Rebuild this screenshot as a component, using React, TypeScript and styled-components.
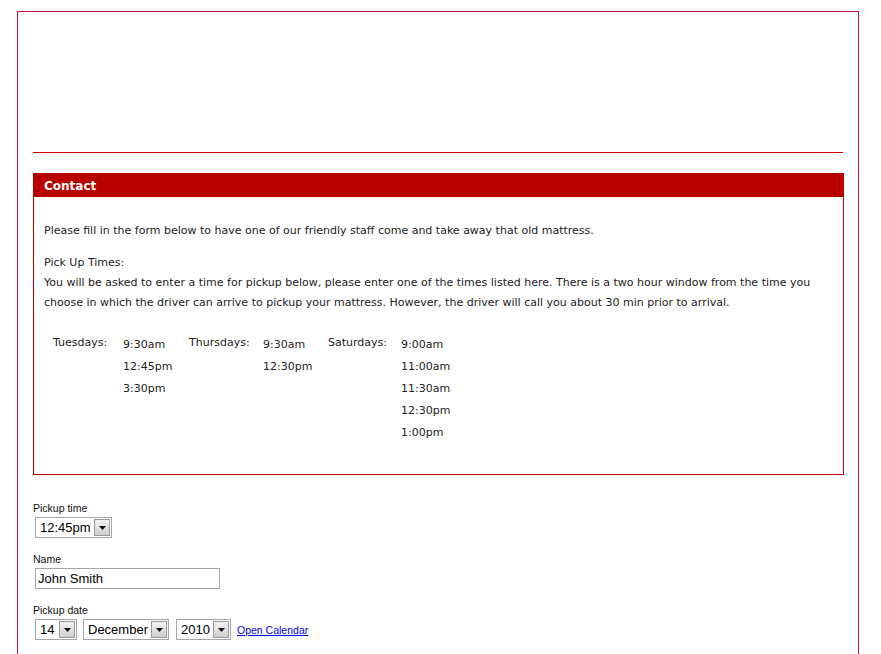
import React from "react";
import styled, { createGlobalStyle } from "styled-components";

const GlobalStyle = createGlobalStyle`
  html, body {
    margin: 0;
    padding: 0;
    background: #ffffff;
  }
  body {
    font-family: "DejaVu Sans", Tahoma, Verdana, sans-serif;
    color: #222;
  }
`;

const schedule = [
  { day: "Tuesdays:", times: ["9:30am", "12:45pm", "3:30pm"] },
  { day: "Thursdays:", times: ["9:30am", "12:30pm"] },
  { day: "Saturdays:", times: ["9:00am", "11:00am", "11:30am", "12:30pm", "1:00pm"] },
];

const Dropdown = ({ value, width }: { value: string; width: number }) => (
  <SelectBox $width={width}>
    <SelectValue>{value}</SelectValue>
    <ArrowButton>
      <svg width="7" height="4" viewBox="0 0 7 4">
        <path d="M0 0h7L3.5 4z" fill="#111" />
      </svg>
    </ArrowButton>
  </SelectBox>
);

const App = () => {
  return (
    <>
      <GlobalStyle />
      <Page>
        <Frame>
          <Banner />
          <Rule />
          <ContactBox>
            <ContactHeader>Contact</ContactHeader>
            <ContactBody>
              <Para>
                Please fill in the form below to have one of our friendly staff come
                and take away that old mattress.
              </Para>
              <Para>
                Pick Up Times:
                <br />
                You will be asked to enter a time for pickup below, please enter one of
                the times listed here. There is a two hour window from the time you
                choose in which the driver can arrive to pickup your mattress. However,
                the driver will call you about 30 min prior to arrival.
              </Para>
              <Schedule>
                {schedule.map((s) => (
                  <React.Fragment key={s.day}>
                    <DayLabel>{s.day}</DayLabel>
                    <TimeList>
                      {s.times.map((t) => (
                        <Time key={t}>{t}</Time>
                      ))}
                    </TimeList>
                  </React.Fragment>
                ))}
              </Schedule>
            </ContactBody>
          </ContactBox>

          <Form>
            <Field>
              <Label>Pickup time</Label>
              <Controls>
                <Dropdown value="12:45pm" width={77} />
              </Controls>
            </Field>
            <Field>
              <Label>Name</Label>
              <Controls>
                <TextInput defaultValue="John Smith" />
              </Controls>
            </Field>
            <Field>
              <Label>Pickup date</Label>
              <Controls>
                <Dropdown value="14" width={42} />
                <Gap $w={6} />
                <Dropdown value="December" width={86} />
                <Gap $w={7} />
                <Dropdown value="2010" width={55} />
                <CalendarLink href="#">Open Calendar</CalendarLink>
              </Controls>
            </Field>
          </Form>
        </Frame>
      </Page>
    </>
  );
};

export default App;

const Page = styled.div`
  padding: 11px 22px 0 17px;
  height: 654px;
  box-sizing: border-box;
  overflow: hidden;
`;

const Frame = styled.div`
  border: 1px solid #c8103c;
  border-bottom: none;
  padding: 0 14px 40px 15px;
  min-height: 700px;
`;

const Banner = styled.div`
  height: 140px;
`;

const Rule = styled.div`
  height: 1px;
  background: #cc0000;
  margin-right: 1px;
`;

const ContactBox = styled.div`
  margin-top: 20px;
  border: 1px solid #c00000;
`;

const ContactHeader = styled.div`
  background: #b80000;
  color: #fff;
  font-weight: bold;
  font-size: 12px;
  height: 24px;
  box-sizing: border-box;
  padding: 2px 11px 0;
  line-height: 22px;
  margin: -1px -1px 0;
`;

const ContactBody = styled.div`
  padding: 24px 10px 30px 10px;
  font-size: 11px;
  color: #222;
`;

const Para = styled.p`
  margin: 0 0 12px;
  line-height: 20px;
`;

const Schedule = styled.div`
  display: grid;
  grid-template-columns: 70px 66px 74px 65px 73px auto;
  padding: 9px 0 0 9px;
`;

const DayLabel = styled.div`
  line-height: 18px;
`;

const TimeList = styled.div`
  display: flex;
  flex-direction: column;
`;

const Time = styled.div`
  line-height: 22px;
`;

const Form = styled.div`
  margin-top: 26px;
`;

const Field = styled.div`
  margin-bottom: 14px;
`;

const Label = styled.div`
  font-family: "Liberation Sans", Arial, sans-serif;
  font-size: 10.5px;
  color: #111;
  line-height: 14px;
`;

const Controls = styled.div`
  display: flex;
  align-items: center;
  margin-top: 2px;
  padding-left: 2px;
`;

const SelectBox = styled.div<{ $width: number }>`
  width: ${(p) => p.$width}px;
  height: 21px;
  box-sizing: border-box;
  border: 1px solid #a7a7a7;
  background: #fff;
  display: flex;
  align-items: center;
  justify-content: space-between;
  padding: 0 1px 0 4px;
`;

const SelectValue = styled.span`
  font-family: "Liberation Sans", Arial, sans-serif;
  font-size: 13px;
  color: #000;
  white-space: nowrap;
`;

const ArrowButton = styled.span`
  width: 16px;
  height: 17px;
  flex-shrink: 0;
  box-sizing: border-box;
  border: 1px solid #9a9a9a;
  background: linear-gradient(#f2f2f2, #cfcfcf);
  display: flex;
  align-items: center;
  justify-content: center;
`;

const Gap = styled.span<{ $w: number }>`
  width: ${(p) => p.$w}px;
`;

const TextInput = styled.input`
  width: 185px;
  height: 21px;
  box-sizing: border-box;
  border: 1px solid #a7a7a7;
  padding: 0 2px;
  font-family: "Liberation Sans", Arial, sans-serif;
  font-size: 13px;
  color: #000;
  outline: none;
`;

const CalendarLink = styled.a`
  margin-left: 6px;
  font-family: "Liberation Sans", Arial, sans-serif;
  font-size: 10.5px;
  color: #0000ee;
  text-decoration: underline;
`;
